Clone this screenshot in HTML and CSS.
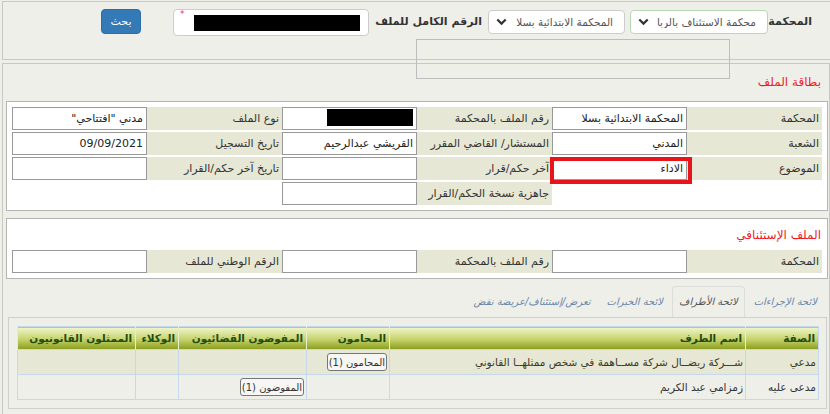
FILE: index.html
```html
<!DOCTYPE html>
<html lang="ar" dir="rtl">
<head>
    <meta charset="UTF-8">
    <meta name="viewport" content="width=device-width, initial-scale=1.0">
    <title>بطاقة الملف</title>
    <link rel="stylesheet" href="styles.css">
</head>
<body>
    <div class="topbar">
        <div class="search-row">
            <label class="top-label court-label">المحكمة</label>
            <div class="select select-active">
                <span class="select-text">محكمة الاستئناف بالربا</span>
                <svg class="chevron" width="11" height="8" viewBox="0 0 11 8"><path d="M1.3 1.5 L5.5 5.6 L9.7 1.5" fill="none" stroke="#333" stroke-width="2.2"/></svg>
            </div>
            <div class="select">
                <span class="select-text">المحكمة الابتدائية بسلا</span>
                <svg class="chevron" width="11" height="8" viewBox="0 0 11 8"><path d="M1.3 1.5 L5.5 5.6 L9.7 1.5" fill="none" stroke="#333" stroke-width="2.2"/></svg>
            </div>
            <label class="top-label number-label">الرقم الكامل للملف</label>
            <div class="file-number">
                <span class="required">*</span>
                <span class="redacted"></span>
            </div>
            <button class="btn-search">بحث</button>
        </div>
    </div>

    <!-- empty suggestion box hanging over the header -->
    <div class="suggest-box"></div>

    <div class="main">
        <div class="section-title">بطاقة الملف</div>

        <div class="card">
            <div class="form-grid">
                <div class="cell-label">المحكمة</div>
                <div class="cell-value"><input class="field" readonly value="المحكمة الابتدائية بسلا"></div>
                <div class="cell-label">رقم الملف بالمحكمة</div>
                <div class="cell-value"><div class="field"><span class="redacted-small"></span></div></div>
                <div class="cell-label">نوع الملف</div>
                <div class="cell-value"><input class="field" readonly value='مدني "افتتاحي"'></div>

                <div class="cell-label">الشعبة</div>
                <div class="cell-value"><input class="field" readonly value="المدني"></div>
                <div class="cell-label">المستشار/ القاضي المقرر</div>
                <div class="cell-value"><input class="field" readonly value="القريشي عبدالرحيم"></div>
                <div class="cell-label">تاريخ التسجيل</div>
                <div class="cell-value"><input class="field" readonly value="09/09/2021"></div>

                <div class="cell-label">الموضوع</div>
                <div class="cell-value flagged"><input class="field" readonly value="الاداء"></div>
                <div class="cell-label">آخر حكم/قرار</div>
                <div class="cell-value"><input class="field" readonly value=""></div>
                <div class="cell-label">تاريخ آخر حكم/القرار</div>
                <div class="cell-value"><input class="field" readonly value=""></div>

                <div class="cell-empty"></div>
                <div class="cell-empty"></div>
                <div class="cell-label">جاهزية نسخة الحكم/القرار</div>
                <div class="cell-value"><input class="field" readonly value=""></div>
                <div class="cell-empty"></div>
                <div class="cell-empty"></div>
            </div>
        </div>

        <div class="card card-appeal">
            <div class="card-title">الملف الإستئنافي</div>
            <div class="form-grid">
                <div class="cell-label">المحكمة</div>
                <div class="cell-value"><input class="field" readonly value=""></div>
                <div class="cell-label">رقم الملف بالمحكمة</div>
                <div class="cell-value"><input class="field" readonly value=""></div>
                <div class="cell-label">الرقم الوطني للملف</div>
                <div class="cell-value"><input class="field" readonly value=""></div>
            </div>
        </div>

        <ul class="tabs">
            <li><a href="#">لائحة الإجراءات</a></li>
            <li class="active"><a href="#">لائحة الأطراف</a></li>
            <li><a href="#">لائحة الخبرات</a></li>
            <li><a href="#">تعرض/إستئناف/عريضة نقض</a></li>
        </ul>

        <div class="tab-panel">
            <table class="parties">
                <colgroup>
                    <col style="width:73px">
                    <col style="width:356px">
                    <col style="width:83px">
                    <col style="width:128px">
                    <col style="width:43px">
                    <col style="width:118px">
                </colgroup>
                <thead>
                    <tr>
                        <th>الصفة</th>
                        <th>اسم الطرف</th>
                        <th>المحامون</th>
                        <th>المفوضون القضائيون</th>
                        <th>الوكلاء</th>
                        <th>الممثلون القانونيون</th>
                    </tr>
                </thead>
                <tbody>
                    <tr class="odd">
                        <td>مدعي</td>
                        <td>شـــركة ريضــال شركة مســاهمة في شخص ممثلهــا القانوني</td>
                        <td><button class="btn-mini">المحامون (1)</button></td>
                        <td></td>
                        <td></td>
                        <td></td>
                    </tr>
                    <tr>
                        <td>مدعى عليه</td>
                        <td>زمزامي عبد الكريم</td>
                        <td></td>
                        <td><button class="btn-mini">المفوضون (1)</button></td>
                        <td></td>
                        <td></td>
                    </tr>
                </tbody>
            </table>
        </div>
    </div>
</body>
</html>
```

FILE: styles.css
```css
html, body {
    margin: 0;
    padding: 0;
}

body {
    background: #efefea;
    font-family: "DejaVu Sans", sans-serif;
    font-size: 11px;
    color: #333;
    position: relative;
}

/* ---- search header ---- */
.topbar {
    margin-top: 1px;
    margin-left: 2px;
    height: 57px;
    border-top: 1px solid #c8c8c5;
    border-left: 1px solid #c8c8c5;
    border-bottom: 1px solid #c8c8c5;
}

.search-row {
    display: flex;
    align-items: flex-start;
    padding-top: 7px;
    padding-right: 18px;
}

.top-label {
    box-sizing: border-box;
    margin-top: 4px;
    line-height: 18px;
    font-weight: bold;
    font-size: 11px;
    color: #333;
    white-space: nowrap;
    text-align: right;
}

.court-label {
    width: 44px;
}

.number-label {
    width: 119px;
    padding-right: 6px;
}

.select {
    box-sizing: border-box;
    display: flex;
    align-items: center;
    width: 137px;
    height: 24px;
    margin-top: 1px;
    padding: 0 11px 0 7px;
    background: white;
    border: 1px solid #ccc;
    border-radius: 4px;
    color: #555;
    font-size: 10.5px;
}

.select-active {
    width: 138px;
    margin-left: 5px;
    border-color: #b6d8b2;
}

.select-text {
    flex: 1;
    overflow: hidden;
    white-space: nowrap;
    text-align: right;
    margin-left: 5px;
}

.chevron {
    flex: none;
}

.file-number {
    position: relative;
    box-sizing: border-box;
    width: 196px;
    height: 27px;
    padding: 5px 8px 0 0;
    background: white;
    border: 1px solid #ccc;
    border-radius: 4px;
}

.required {
    position: absolute;
    left: 6px;
    top: 0;
    color: #f0306a;
    font-size: 9px;
    line-height: 9px;
}

.redacted {
    display: block;
    width: 166px;
    height: 16px;
    background: #000;
}

.btn-search {
    width: 40px;
    height: 25px;
    margin-right: 32px;
    padding: 0;
    background: #337ab7;
    border: 1px solid #2e6da4;
    border-radius: 4px;
    color: white;
    font-family: "DejaVu Sans", sans-serif;
    font-size: 11px;
}

.suggest-box {
    position: absolute;
    left: 416px;
    top: 39px;
    width: 312px;
    height: 38px;
    border: 1px solid #bdbdbd;
}

/* ---- main frame ---- */
.main {
    margin: 3px 0 0 2px;
    border-top: 1px solid #c8c8c5;
    border-left: 1px solid #c8c8c5;
    border-right: 1px solid #c8c8c5;
    padding-bottom: 20px;
}

.section-title {
    margin-top: 10px;
    padding-right: 8px;
    line-height: 16px;
    color: #ee1c24;
    font-size: 12px;
}

.card {
    margin: 11px 1px 0 3px;
    padding: 5px;
    background: white;
    border: 1px solid #b4b4b0;
}

.card-appeal {
    margin-top: 7px;
}

.card-title {
    margin: 3px 0 7px;
    padding-right: 1px;
    line-height: 16px;
    color: #ee1c24;
    font-size: 12px;
}

.form-grid {
    display: grid;
    grid-template-columns: repeat(6, 1fr);
    grid-auto-rows: 23px;
    row-gap: 2px;
}

.cell-label {
    display: flex;
    align-items: center;
    padding-right: 3px;
    background: #e6e8d5;
    color: #333;
    white-space: nowrap;
}

.cell-value {
    display: flex;
}

.field {
    box-sizing: border-box;
    width: 100%;
    height: 100%;
    margin: 0;
    padding: 0 3px;
    background: white;
    border: 1px solid #999;
    font-family: "DejaVu Sans", sans-serif;
    font-size: 11px;
    color: #222;
    text-align: right;
    outline: none;
}

.redacted-small {
    display: block;
    width: 86px;
    height: 17px;
    margin-top: 1px;
    background: #000;
}

.flagged {
    position: relative;
}

.flagged::after {
    content: "";
    position: absolute;
    left: -2px;
    right: -5px;
    top: 0;
    bottom: -4px;
    border: 4px solid #e8141c;
}

/* ---- tabs ---- */
.tabs {
    display: flex;
    margin: 7px 0 0;
    padding: 0 5px 0 0;
    list-style: none;
}

.tabs li {
    margin-left: 2px;
}

.tabs a {
    display: block;
    padding: 0 6px;
    line-height: 30px;
    border: 1px solid transparent;
    border-bottom: none;
    border-radius: 4px 4px 0 0;
    color: #6a87a8;
    font-style: italic;
    font-size: 10px;
    text-decoration: none;
}

.tabs li.active a {
    border-color: #dcdcd8;
    color: #555;
}

.tab-panel {
    margin: 0 2px 0 5px;
    padding: 8px 7px;
    border: 1px solid #cfcfcb;
}

/* ---- parties table ---- */
.parties {
    width: 801px;
    border-collapse: collapse;
    table-layout: fixed;
    border: 1px solid #c6d9ec;
}

.parties th {
    height: 22px;
    padding: 0 3px;
    background: linear-gradient(#f1f6cb, #c4d26a 55%, #8a9c1c);
    border-left: 1px solid #e8ecd0;
    color: #1f4d12;
    font-size: 10.5px;
    font-weight: bold;
    text-align: right;
    white-space: nowrap;
}

.parties td {
    height: 24px;
    padding: 0 2px;
    border: 1px solid #c6d9ec;
    color: #333;
    font-size: 10.5px;
    text-align: right;
    white-space: nowrap;
    overflow: hidden;
}

.parties tr.odd td {
    background: #e6e8d5;
    color: #3b3b22;
}

.btn-mini {
    height: 18px;
    padding: 0 1px;
    background: #f6f6f4;
    border: 1px solid #777;
    border-radius: 3px;
    font-family: "DejaVu Sans", sans-serif;
    font-size: 10px;
    color: #333;
}
```
